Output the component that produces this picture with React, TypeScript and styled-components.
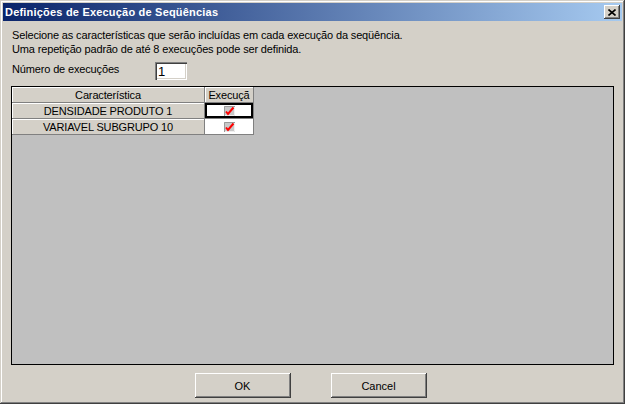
import { FunctionComponent, ReactElement } from 'react'
import styled, { createGlobalStyle } from 'styled-components'

interface Row {
  name: string;
  checked: boolean;
  focused: boolean;
}

const rows: Row[] = [
  { name: 'DENSIDADE PRODUTO 1', checked: true, focused: true },
  { name: 'VARIAVEL SUBGRUPO 10', checked: true, focused: false },
]

const GlobalStyle = createGlobalStyle`
  html, body {
    margin: 0;
    padding: 0;
    background: #d4d0c8;
  }
  body {
    font-family: 'Liberation Sans', Arial, sans-serif;
    font-size: 11px;
    color: #000;
  }
`

const Window = styled.div`
  width: 625px;
  height: 404px;
  box-sizing: border-box;
  padding: 3px;
  display: flex;
  flex-direction: column;
  background: #d4d0c8;
  box-shadow: inset -1px -1px #404040, inset 1px 1px #d4d0c8, inset -2px -2px #808080, inset 2px 2px #fff;
`

const TitleBar = styled.div`
  height: 18px;
  display: flex;
  align-items: center;
  justify-content: space-between;
  padding: 0 2px 0 2px;
  background: linear-gradient(90deg, #0a246a 0%, #a6caf0 100%);
`

const Title = styled.span`
  color: #fff;
  font-weight: bold;
  font-size: 11px;
  letter-spacing: 0.2px;
`

const CloseButton = styled.div`
  width: 16px;
  height: 14px;
  box-sizing: border-box;
  display: flex;
  align-items: center;
  justify-content: center;
  background: #d4d0c8;
  box-shadow: inset -1px -1px #404040, inset 1px 1px #fff, inset -2px -2px #808080;
`

const Body = styled.div`
  flex: 1;
  display: flex;
  flex-direction: column;
  padding: 7px 8px 3px 8px;
  letter-spacing: -0.15px;
`

const Description = styled.div`
  line-height: 14px;
  padding-left: 1px;
`

const FieldRow = styled.div`
  display: flex;
  align-items: flex-start;
  margin-top: 6px;
  padding-left: 1px;
`

const FieldLabel = styled.span`
  width: 143px;
  line-height: 13px;
  padding-top: 1px;
`

const NumberInput = styled.div`
  width: 32px;
  height: 18px;
  box-sizing: border-box;
  padding: 2px 3px;
  background: #fff;
  font-size: 13px;
  line-height: 15px;
  box-shadow: inset 1px 1px #808080, inset 2px 2px #404040, inset -1px -1px #fff, inset -2px -2px #d4d0c8;
`

const GridPanel = styled.div`
  flex: 1;
  margin-top: 6px;
  border: 1px solid #000;
  background: #c0c0c0;
`

const GridRow = styled.div`
  display: flex;
  height: 16px;
`

const HeaderCell = styled.div<{ $width: number }>`
  width: ${props => props.$width}px;
  box-sizing: border-box;
  display: flex;
  align-items: center;
  justify-content: center;
  background: #d4d0c8;
  border-right: 1px solid #808080;
  border-bottom: 1px solid #808080;
  box-shadow: inset 1px 1px #fff;
  white-space: nowrap;
  overflow: hidden;
`

const DataCell = styled.div<{ $width: number; $focused: boolean }>`
  width: ${props => props.$width}px;
  box-sizing: border-box;
  display: flex;
  align-items: center;
  justify-content: center;
  background: #fff;
  border-right: 1px solid #808080;
  border-bottom: 1px solid #808080;
  box-shadow: ${props => (props.$focused ? 'inset 0 0 0 2px #000' : 'none')};
`

const Footer = styled.div`
  display: flex;
  justify-content: center;
  gap: 40px;
  margin-top: 8px;
  padding-right: 4px;
`

const Button = styled.button`
  width: 96px;
  height: 25px;
  border: none;
  padding: 0;
  background: #d4d0c8;
  font-family: 'Liberation Sans', Arial, sans-serif;
  font-size: 11px;
  color: #000;
  box-shadow: inset -1px -1px #404040, inset 1px 1px #fff, inset -2px -2px #808080;
`

const CheckMark: FunctionComponent = (): ReactElement => (
  <svg width="11" height="10" viewBox="0 0 11 10">
    <rect x="0" y="0" width="11" height="10" fill="#c8c8c8" />
    <path d="M0 9.5H10.5V0" stroke="#f0f0f0" fill="none" />
    <path d="M0.5 10V0.5H11" stroke="#9a9a9a" fill="none" />
    <path d="M2 5.5L4 8L9.5 1.5" stroke="#ff0000" strokeWidth="2" fill="none" />
  </svg>
)

const App: FunctionComponent = (): ReactElement => (
  <>
    <GlobalStyle />
    <Window>
      <TitleBar>
        <Title>Definições de Execução de Seqüências</Title>
        <CloseButton>
          <svg width="8" height="7" viewBox="0 0 8 7">
            <path d="M0.5 0.5L7.5 6.5M7.5 0.5L0.5 6.5" stroke="#000" strokeWidth="1.6" />
          </svg>
        </CloseButton>
      </TitleBar>
      <Body>
        <Description>
          Selecione as características que serão incluídas em cada execução da seqüência.
          <br />
          Uma repetição padrão de até 8 execuções pode ser definida.
        </Description>
        <FieldRow>
          <FieldLabel>Número de execuções</FieldLabel>
          <NumberInput>1</NumberInput>
        </FieldRow>
        <GridPanel>
          <GridRow>
            <HeaderCell $width={193}>Característica</HeaderCell>
            <HeaderCell $width={49}>Execuçã</HeaderCell>
          </GridRow>
          {rows.map(row => (
            <GridRow key={row.name}>
              <HeaderCell $width={193}>{row.name}</HeaderCell>
              <DataCell $width={49} $focused={row.focused}>
                {row.checked && <CheckMark />}
              </DataCell>
            </GridRow>
          ))}
        </GridPanel>
        <Footer>
          <Button>OK</Button>
          <Button>Cancel</Button>
        </Footer>
      </Body>
    </Window>
  </>
)

export default App
